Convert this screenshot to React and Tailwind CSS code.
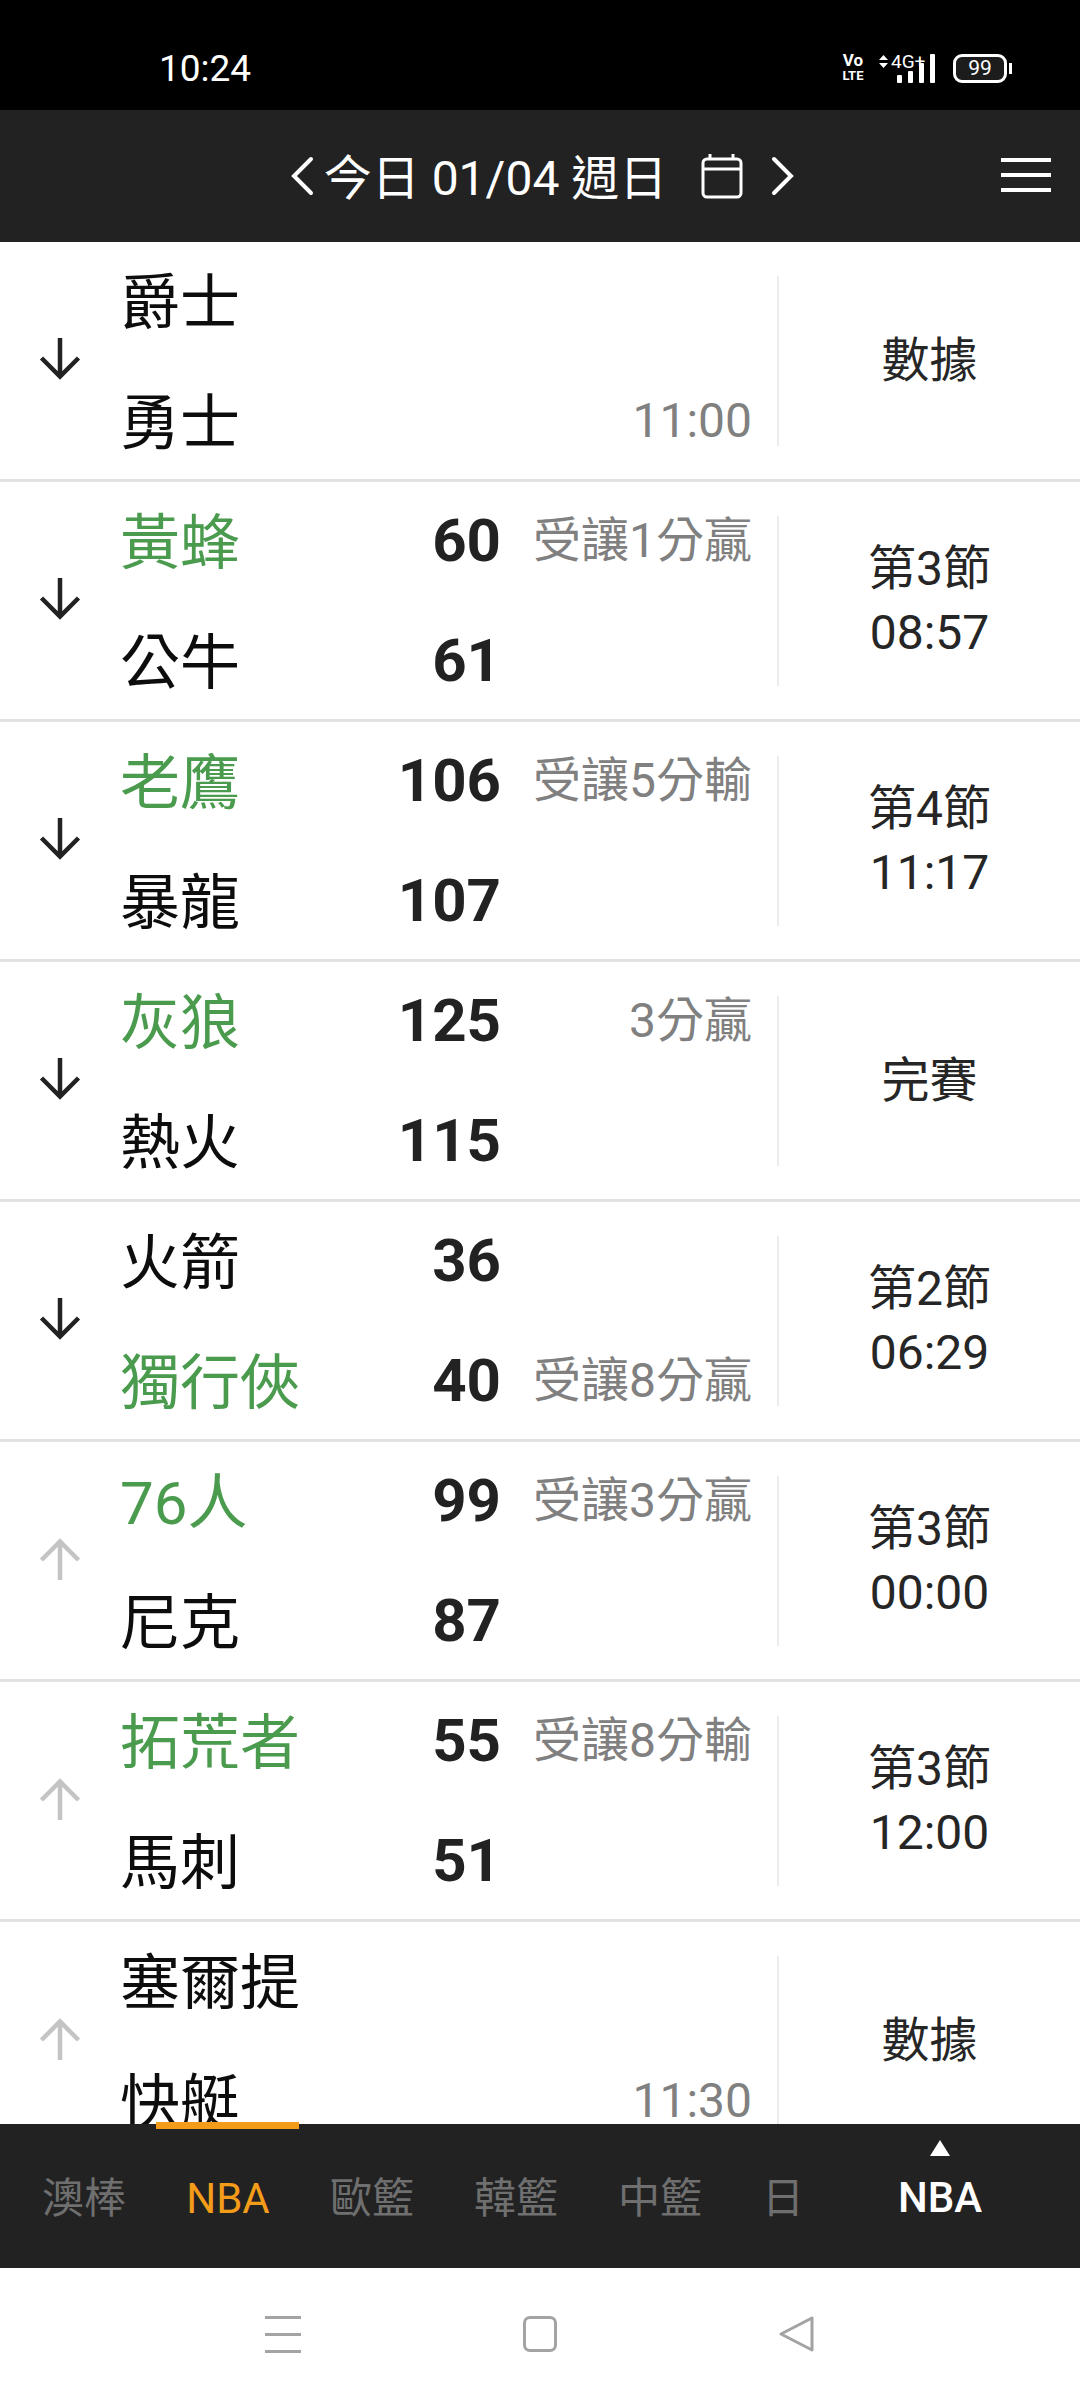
import React from 'react';

const games = [
  { dir: 'down', a: '爵士', b: '勇士', note: '11:00', noteRow: 'b', status: ['數據'] },
  { dir: 'down', a: '黃蜂', b: '公牛', sa: 60, sb: 61, win: 'a', note: '受讓1分贏', noteRow: 'a', status: ['第3節', '08:57'] },
  { dir: 'down', a: '老鷹', b: '暴龍', sa: 106, sb: 107, win: 'a', note: '受讓5分輸', noteRow: 'a', status: ['第4節', '11:17'] },
  { dir: 'down', a: '灰狼', b: '熱火', sa: 125, sb: 115, win: 'a', note: '3分贏', noteRow: 'a', status: ['完賽'] },
  { dir: 'down', a: '火箭', b: '獨行俠', sa: 36, sb: 40, win: 'b', note: '受讓8分贏', noteRow: 'b', status: ['第2節', '06:29'] },
  { dir: 'up', a: '76人', b: '尼克', sa: 99, sb: 87, win: 'a', note: '受讓3分贏', noteRow: 'a', status: ['第3節', '00:00'] },
  { dir: 'up', a: '拓荒者', b: '馬刺', sa: 55, sb: 51, win: 'a', note: '受讓8分輸', noteRow: 'a', status: ['第3節', '12:00'] },
  { dir: 'up', a: '塞爾提', b: '快艇', note: '11:30', noteRow: 'b', status: ['數據'] },
];

const tabs = ['澳棒', 'NBA', '歐籃', '韓籃', '中籃'];

const Arrow = ({ dir }) => (
  <svg width="42" height="42" viewBox="0 0 42 42" fill="none" strokeWidth="4.5" className={dir === 'up' ? 'rotate-180 text-[#c4c4c4]' : 'text-[#222222]'} stroke="currentColor">
    <path d="M21 0V38M2.500 20L21 38.500L39.500 20" />
  </svg>
);

const TeamRow = ({ name, score, green, note }) => (
  <div className="flex h-[100px] items-center">
    <div className={`ml-[-2px] w-[202px] pt-[6px] text-[60px] leading-none ${green ? 'text-[#4a9b4d]' : 'text-[#0d0d0d]'}`}>{name}</div>
    <div className="w-[179px] text-right text-[60px] leading-none font-bold text-[#222222]">{score}</div>
    <div className="flex-1 pt-[1px] text-right text-[48px] leading-none whitespace-nowrap text-[#808080]">{note}</div>
  </div>
);

const GameRow = ({ game }) => (
  <div className="flex h-[240px] shrink-0 items-center border-b-[3px] border-[#e2e2e2]">
    <div className="flex w-[122px] shrink-0 pb-[3px] pl-[39px]">
      <Arrow dir={game.dir} />
    </div>
    <div className="flex w-[630px] shrink-0 flex-col gap-[20px]">
      <TeamRow name={game.a} score={game.sa} green={game.win === 'a'} note={game.noteRow === 'a' ? game.note : ''} />
      <TeamRow name={game.b} score={game.sb} green={game.win === 'b'} note={game.noteRow === 'b' ? game.note : ''} />
    </div>
    <div className="ml-[25px] h-[170px] w-[2px] shrink-0 bg-[#ececec]" />
    <div className="flex flex-1 flex-col items-center text-[48px] leading-[64px] text-[#262626]">
      {game.status.map((line) => (
        <div key={line}>{line}</div>
      ))}
    </div>
  </div>
);

const StatusBar = () => (
  <div className="flex h-[110px] shrink-0 items-center justify-between bg-black pt-[26px] pr-[68px] pl-[159px] text-white">
    <div className="text-[37px] leading-none">10:24</div>
    <div className="flex items-center">
      <div className="flex w-[24px] flex-col items-center font-bold">
        <span className="text-[17px] leading-[15px]">Vo</span>
        <span className="text-[13px] leading-[15px]">LTE</span>
      </div>
      <div className="relative ml-[14px] h-[29px] w-[56px]">
        <svg width="56" height="29" viewBox="0 0 56 29" fill="white">
          <path d="M4.500 1L9 6H0zM4.500 14L0 9H9z" />
          <rect x="18" y="21" width="5" height="8" rx="1" />
          <rect x="29" y="17" width="5" height="12" rx="1" />
          <rect x="40" y="9" width="5" height="20" rx="1" />
          <rect x="51" y="0" width="5" height="29" rx="1" />
        </svg>
        <span className="absolute top-[-2px] left-[12px] text-[19px] leading-[20px]">4G+</span>
      </div>
      <div className="ml-[18px] flex h-[29px] w-[54px] items-center justify-center rounded-[9px] border-[3px] border-white bg-[#1c1c1c] text-[21px] leading-none">99</div>
      <div className="ml-[2px] h-[11px] w-[3px] bg-white" />
    </div>
  </div>
);

const Header = () => (
  <div className="relative flex h-[132px] shrink-0 items-center justify-center bg-[#222222] text-white">
    <div className="flex items-center pl-[5px]">
      <svg width="24" height="40" viewBox="0 0 24 40" fill="none" stroke="white" strokeWidth="4" strokeLinecap="round">
        <path d="M21 3L4 20L21 37" />
      </svg>
      <span className="ml-[10px] pt-[5px] text-[48px] leading-none">今日 01/04 週日</span>
      <svg className="ml-[34px]" width="42" height="46" viewBox="0 0 42 46" fill="none" stroke="white" strokeWidth="3">
        <rect x="2" y="6" width="38" height="38" rx="4" />
        <path d="M2 16H40M9 1V6M32 1V6" />
      </svg>
      <svg className="ml-[28px]" width="24" height="40" viewBox="0 0 24 40" fill="none" stroke="white" strokeWidth="4" strokeLinecap="round">
        <path d="M3 3L20 20L3 37" />
      </svg>
    </div>
    <div className="absolute top-[48px] right-[29px] flex w-[50px] flex-col gap-[11px]">
      <div className="h-[4px] bg-white" />
      <div className="h-[4px] bg-white" />
      <div className="h-[4px] bg-white" />
    </div>
  </div>
);

const TabBar = () => (
  <div className="relative flex h-[144px] shrink-0 bg-[#222222]">
    <div className="absolute top-[-2px] left-[156px] h-[7px] w-[143px] bg-[#f39c1a]" />
    <div className="flex w-[860px] items-center pt-[6px] pl-[12px] text-[42px] leading-none text-[#6f6f6f]">
      {tabs.map((tab) => (
        <div key={tab} className={`w-[144px] text-center ${tab === 'NBA' ? 'text-[#f39c1a]' : ''}`}>
          {tab}
        </div>
      ))}
      <div className="w-[124px] pl-[30px]">日</div>
    </div>
    <div className="flex flex-1 flex-col items-center pt-[16px] pr-[60px] text-white">
      <div className="h-0 w-0 border-x-[10px] border-b-[16px] border-x-transparent border-b-white" />
      <div className="mt-[21px] text-[42px] leading-none font-medium">NBA</div>
    </div>
  </div>
);

const NavBar = () => (
  <div className="flex flex-1 items-center justify-center gap-[222px] bg-white">
    <div className="flex w-[36px] flex-col gap-[14px]">
      <div className="h-[3px] bg-[#a3a3a3]" />
      <div className="h-[3px] bg-[#a3a3a3]" />
      <div className="h-[3px] bg-[#a3a3a3]" />
    </div>
    <div className="h-[36px] w-[34px] rounded-[7px] border-[3px] border-[#a3a3a3]" />
    <svg width="36" height="36" viewBox="0 0 36 36" fill="none" stroke="#a3a3a3" strokeWidth="3" strokeLinejoin="round">
      <path d="M33 2V34L2 18Z" />
    </svg>
  </div>
);

const App = () => (
  <div className="flex h-[2400px] w-[1080px] flex-col overflow-hidden bg-white font-['Roboto','Noto_Sans_CJK_TC',sans-serif]">
    <StatusBar />
    <Header />
    <div className="flex h-[1882px] shrink-0 flex-col overflow-hidden">
      {games.map((game) => (
        <GameRow key={game.a} game={game} />
      ))}
    </div>
    <TabBar />
    <NavBar />
  </div>
);

export default App;
